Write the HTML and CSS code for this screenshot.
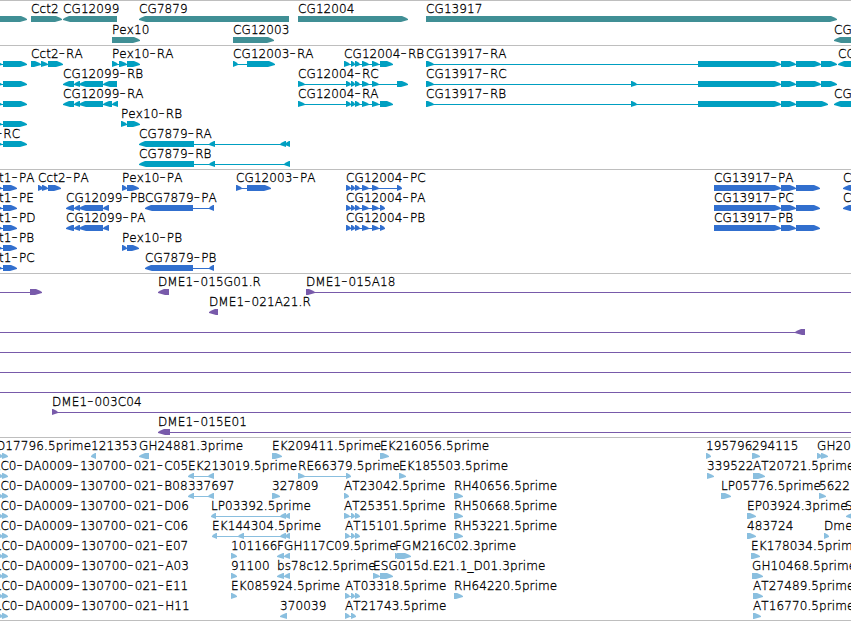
FILE: index.html
```html
<!DOCTYPE html>
<html lang="en">
<head>
    <meta charset="UTF-8">
    <title>Genome Browser</title>
    <link rel="stylesheet" href="styles.css">
</head>
<body>
    <main class="browser">
        <section class="track genes" id="genes"></section>
        <section class="track transcripts" id="transcripts"></section>
        <section class="track proteins" id="proteins"></section>
        <section class="track clones" id="clones"></section>
        <section class="track ests" id="ests"></section>
    </main>
    <script src="tracks.js"></script>
</body>
</html>
```

FILE: styles.css
```css
body {
    margin: 0;
    background: #fff;
    overflow: hidden;
}
.browser {
    display: flex;
    flex-direction: column;
    width: 851px;
    height: 621px;
    box-sizing: border-box;
    border-bottom: 1px solid #bebebe;
}
.track {
    box-sizing: border-box;
    border-top: 1px solid #bebebe;
}
.track svg {
    display: block;
    width: 100%;
    height: 100%;
    overflow: visible;
}
.genes {
    height: 45px;
    color: #408f95;
}
.transcripts {
    height: 124px;
    color: #009fc1;
}
.proteins {
    height: 104px;
    color: #316fce;
}
.clones {
    height: 164px;
    color: #785aaa;
}
.ests {
    height: 183px;
    color: #8abfdf;
}
.exon, .intron {
    fill: currentColor;
}
.label {
    font-family: "DejaVu Sans", sans-serif;
    font-size: 12px;
    font-weight: 200;
    font-kerning: none;
    letter-spacing: 0.1px;
    fill: #000;
    stroke: #000;
    stroke-width: 0.3px;
}
.dash {
    font-size: 17px;
    letter-spacing: 1.2px;
}
```

FILE: tracks.js
```js
// feature: [row, label, strand, exons, label x (optional)]
const left = [[-5, 2], [3, 27]];
const leftCds = [[-5, 2], [3, 17]];
const est = [[-3, 3], [2, 8]];
const ex12004 = [[346, 351], [351, 355], [355, 360], [362, 369], [372, 379]];
const ex12099 = [[74, 80], [79, 103]];
const ex13917 = [[781, 796], [796, 821], [821, 837]];
const cds13917 = [[714, 781], [781, 796], [796, 820]];
const at3 = [[345, 350], [351, 355], [355, 360]];

const tracks = {
    genes: { pitch: 21, features: [
        [0, "", "+", [[-5, 27]]],
        [0, "Cct2", "+", [[31, 62]]],
        [0, "CG12099", "-", [[63, 117]]],
        [0, "CG7879", "-", [[139, 289]]],
        [0, "CG12004", "+", [[298, 408]]],
        [0, "CG13917", "+", [[426, 837]]],
        [1, "Pex10", "+", [[112, 140]]],
        [1, "CG12003", "+", [[233, 274]]],
        [1, "CG", "-", [[834, 870]]]
    ]},
    transcripts: { pitch: 20, features: [
        [0, "", "+", left],
        [0, "Cct2-RA", "+", [[31, 41], [41, 48], [48, 63]]],
        [0, "Pex10-RA", "+", [[112, 118], [119, 127], [127, 140]]],
        [0, "CG12003-RA", "+", [[233, 238], [247, 275]]],
        [0, "CG12004-RB", "+", [[344, 350], ...ex12004.slice(1), [380, 393]]],
        [0, "CG13917-RA", "+", [[426, 434], [698, 781], ...ex13917]],
        [0, "CG", "-", [[838, 870]]],
        [1, "", "+", left],
        [1, "CG12099-RB", "-", [[63, 74], ...ex12099, [103, 117]]],
        [1, "CG12004-RC", "+", [[298, 305], ...ex12004, [397, 408]]],
        [1, "CG13917-RC", "+", [[426, 434], [631, 637], [698, 781], ...ex13917]],
        [2, "", "+", left],
        [2, "CG12099-RA", "-", [[63, 74], ...ex12099, [103, 112], [112, 118]]],
        [2, "CG12004-RA", "+", [[298, 305], ...ex12004, [380, 393]]],
        [2, "CG13917-RB", "+", [[426, 434], [631, 637], [698, 781], [781, 796], [796, 828]]],
        [2, "CG", "-", [[834, 870]]],
        [3, "", "+", left],
        [3, "Pex10-RB", "+", [[121, 127], [127, 140]]],
        [4, "-RC", "+", left, -4],
        [4, "CG7879-RA", "-", [[139, 194], [209, 215], [280, 286], [285, 290]]],
        [5, "CG7879-RB", "-", [[139, 194], [209, 215], [284, 290]]]
    ]},
    proteins: { pitch: 20, features: [
        [0, "t1-PA", "+", leftCds, -1],
        [0, "Cct2-PA", "+", [[38, 43], [42, 48], [48, 61]]],
        [0, "Pex10-PA", "+", [[122, 127], [127, 139]]],
        [0, "CG12003-PA", "+", [[236, 242], [247, 271]]],
        [0, "CG12004-PC", "+", [...ex12004, [397, 402]]],
        [0, "CG13917-PA", "+", cds13917],
        [0, "C", "-", [[843, 870]]],
        [1, "t1-PE", "+", leftCds, -1],
        [1, "CG12099-PB", "-", [[66, 74], ...ex12099, [103, 109]]],
        [1, "CG7879-PA", "-", [[145, 193], [209, 214]]],
        [1, "CG12004-PA", "+", [...ex12004, [380, 385]]],
        [1, "CG13917-PC", "+", cds13917],
        [1, "C", "-", [[843, 870]]],
        [2, "t1-PD", "+", leftCds, -1],
        [2, "CG12099-PA", "-", [[66, 74], ...ex12099, [103, 109]]],
        [2, "CG12004-PB", "+", [...ex12004, [380, 385]]],
        [2, "CG13917-PB", "+", cds13917],
        [3, "t1-PB", "+", leftCds, -1],
        [3, "Pex10-PB", "+", [[122, 127], [127, 139]]],
        [4, "t1-PC", "+", leftCds, -1],
        [4, "CG7879-PB", "-", [[145, 193], [209, 214]]]
    ]},
    clones: { pitch: 20, features: [
        [0, "", "+", [[-20, -10], [30, 42]]],
        [0, "DME1-015G01.R", "-", [[158, 169]]],
        [0, "DME1-015A18", "+", [[306, 315], [870, 880]]],
        [1, "DME1-021A21.R", "-", [[209, 218]]],
        [2, "", "-", [[-20, -10], [795, 805]]],
        [3, "", "+", [[-20, -10], [870, 880]]],
        [4, "", "+", [[-20, -10], [870, 880]]],
        [5, "", "+", [[-20, -10], [870, 880]]],
        [6, "DME1-003C04", "+", [[52, 58], [870, 880]]],
        [7, "DME1-015E01", "-", [[158, 170], [870, 880]]]
    ]},
    ests: { pitch: 20, features: [
        [0, "D17796.5prime", "+", est, -4],
        [0, "121353", "-", [[91, 96]]],
        [0, "GH24881.3prime", "-", [[139, 149]]],
        [0, "EK209411.5prime", "+", [[272, 282]]],
        [0, "EK216056.5prime", "+", [[380, 389]]],
        [0, "195796", "+", [[706, 711]]],
        [0, "294115", "+", [[752, 760]]],
        [0, "GH20", "+", [[817, 822], [821, 828]]],
        [1, "LC0-DA0009-130700-021-C05", "+", est, -6.4],
        [1, "EK213019.5prime", "-", [[188, 194], [208, 214]]],
        [1, "RE66379.5prime", "+", [[298, 305], [346, 351]]],
        [1, "EK185503.5prime", "+", [[399, 406]]],
        [1, "339522", "+", [[707, 714]]],
        [1, "AT20721.5prime", "+", [[753, 765]]],
        [2, "LC0-DA0009-130700-021-B08", "+", est, -6.4],
        [2, "337697", "-", [[188, 194], [208, 214]]],
        [2, "327809", "+", [[272, 280]]],
        [2, "AT23042.5prime", "+", [[344, 349]]],
        [2, "RH40656.5prime", "+", [[454, 463]]],
        [2, "LP05776.5prime", "+", [[721, 731]]],
        [2, "5622", "+", [[819, 826]]],
        [3, "LC0-DA0009-130700-021-D06", "+", est, -6.4],
        [3, "LP03392.5prime", "-", [[211, 216], [280, 286], [285, 290]]],
        [3, "AT25351.5prime", "+", [[344, 350], [351, 355], [355, 360]]],
        [3, "RH50668.5prime", "+", [[454, 463]]],
        [3, "EP03924.3prime", "+", [[747, 756]]],
        [3, "S", "-", [[846, 870]], 845],
        [4, "LC0-DA0009-130700-021-C06", "+", est, -6.4],
        [4, "EK144304.5prime", "-", [[212, 217], [238, 244], [280, 286], [285, 290]]],
        [4, "AT15101.5prime", "+", at3],
        [4, "RH53221.5prime", "+", [[454, 463]]],
        [4, "483724", "+", [[747, 756]]],
        [4, "Dme", "+", [[824, 829]]],
        [5, "LC0-DA0009-130700-021-E07", "+", est, -5.4],
        [5, "101166", "+", [[231, 237]]],
        [5, "FGH117C09.5prime", "-", [[277, 284], [284, 290]]],
        [5, "FGM216C02.3prime", "+", [[395, 399], [397, 411]]],
        [5, "EK178034.5prime", "+", [[751, 760]]],
        [6, "LC0-DA0009-130700-021-A03", "+", est, -5.4],
        [6, "91100", "+", [[231, 237]]],
        [6, "bs78c12.5prime", "-", [[277, 284], [284, 290]]],
        [6, "ESG015d.E21.1_D01.3prime", "+", [[373, 380], [380, 393]]],
        [6, "GH10468.5prime", "+", [[752, 763]]],
        [7, "LC0-DA0009-130700-021-E11", "+", est, -5.4],
        [7, "EK085924.5prime", "+", [[231, 237]]],
        [7, "AT03318.5prime", "+", at3],
        [7, "RH64220.5prime", "+", [[454, 463]]],
        [7, "AT27489.5prime", "+", [[753, 763]]],
        [8, "LC0-DA0009-130700-021-H11", "+", est, -5.4],
        [8, "370039", "-", [[280, 287]]],
        [8, "AT21743.5prime", "+", [[345, 350], [351, 356]]],
        [8, "AT16770.5prime", "+", [[753, 761]]]
    ]}
};

function exon(a, b, strand) {
    const tip = Math.min(b - a, 7);
    const pts = strand === "+"
        ? [[a, 15], [b - tip + 1, 15], [b - tip / 2 + 1, 16.5], [b, 18], [b, 19], [b - tip / 2, 20], [b - tip, 21], [a, 21]]
        : [[b, 15], [a + tip - 1, 15], [a + tip / 2 - 1, 16.5], [a, 18], [a, 19], [a + tip / 2, 20], [a + tip, 21], [b, 21]];
    return `<polygon class="exon" points="${pts.join(" ")}"/>`;
}

function draw(id) {
    const { pitch, features } = tracks[id];
    let out = "";
    features.forEach(([row, label, strand, exons, x]) => {
        const start = exons[0][0];
        const end = exons[exons.length - 1][1];
        out += `<g transform="translate(0 ${row * pitch})">`;
        out += `<rect class="intron" x="${start}" y="18" width="${end - start}" height="1"/>`;
        out += exons.map(([a, b]) => exon(a, b, strand)).join("");
        if (label) {
            const text = label.replace(/-/g, '<tspan class="dash">-</tspan>');
            out += `<text class="label" x="${x ?? start}" y="12">${text}</text>`;
        }
        out += "</g>";
    });
    document.getElementById(id).innerHTML = `<svg>${out}</svg>`;
}

Object.keys(tracks).forEach(draw);
```
